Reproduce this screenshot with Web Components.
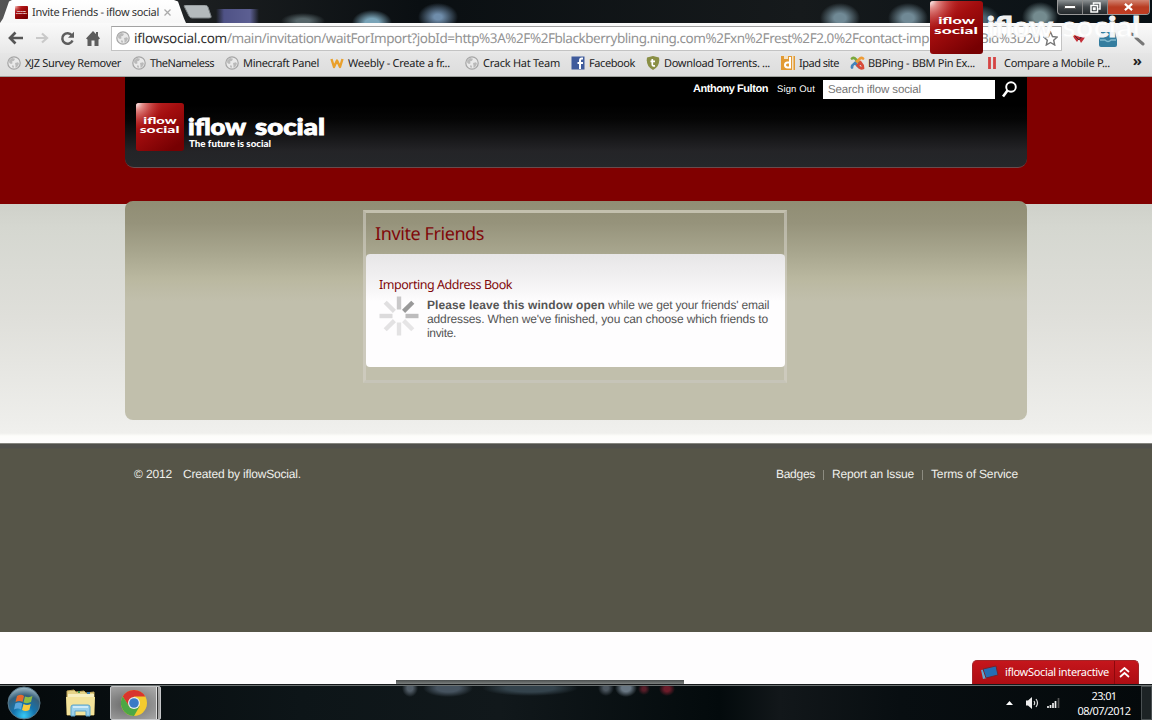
<!DOCTYPE html>
<html lang="en">
<head>
<meta charset="utf-8">
<title>Invite Friends - iflow social</title>
<style>
  html, body {
    margin: 0;
    padding: 0;
  }
  body {
    width: 1152px;
    height: 720px;
    overflow: hidden;
    font: 12px "Liberation Sans", Arial, sans-serif;
    background: #fefdfe;
  }
</style>
</head>
<body>
<desktop-screen></desktop-screen>

<script>
const UI_FONT = '"Noto Sans", "Open Sans", sans-serif';

const ICONS = {
  globe: `<svg width="14" height="14" viewBox="0 0 14 14"><circle cx="7" cy="7" r="6.2" fill="#e9e9e9" stroke="#a5a5a5" stroke-width="1.2"/><path d="M2 4.5 5 2l3 .7-1 2-2 .8.6 1.7L4 8 2.3 7zM8 7l3-.8 1 1.6-2 3.4-1.6.5L8.5 9.500z M5.500 9l1.500 1-.5 2-1.500-1z" fill="#bababa"/></svg>`,
  weebly: `<svg width="14" height="14" viewBox="0 0 14 14"><path d="M1.500 3 4 11 7 4.500 10 11 12.500 3" fill="none" stroke="#e9a02c" stroke-width="2.400" stroke-linejoin="round"/></svg>`,
  facebook: `<svg width="14" height="14" viewBox="0 0 14 14"><rect x=".5" y=".5" width="13" height="13" fill="#3f5b9c"/><path d="M12 2.500h-1.200Q9 2.500 9 4.500V13M6.500 7H12" fill="none" stroke="#fff" stroke-width="2"/></svg>`,
  torrent: `<svg width="14" height="14" viewBox="0 0 14 14"><path d="M7 0 13 1.500Q14.500 10 7 14-.5 10 1 1.500z" fill="#8a8f45"/><path d="M6.300 3v5.500q0 1.800 2.700 1.300M4.500 5.300H9" fill="none" stroke="#fff" stroke-width="1.700"/></svg>`,
  digg: `<svg width="14" height="14" viewBox="0 0 14 14"><path d="M0 0h14v14H0z" fill="#e29a33"/><path d="M9 1v10.500H6.500a2.500 2.500 0 0 1 0-5H9" fill="none" stroke="#fff" stroke-width="2"/><path d="M11 0h1.500v14H11zM3 0h4v3H3z" fill="#f3e2c6"/></svg>`,
  joomla: `<svg width="15" height="14" viewBox="0 0 15 14" fill="none" stroke-width="2.700" stroke-linecap="round"><path d="M2 2.500Q4 1 6 3.500L9.500 7" stroke="#7aa83d"/><path d="M13 2.500Q11 1 9 3.500L5.500 7" stroke="#ee9b36"/><path d="M2 11.500Q1.500 9.500 5 7l4 4" stroke="#4384bd"/><path d="m7.500 9.500 3-3Q13 9 13 12q-2 1-4-1" stroke="#d84a3a"/></svg>`,
  bars: `<svg width="14" height="14" viewBox="0 0 14 14"><path d="M3.500 1v12M8.500 1v12" stroke="#d54444" stroke-width="2.800"/></svg>`,
};

// Base class: clones the class' markup into an open shadow root
class ShadowElement extends HTMLElement {
  constructor() {
    super();
    this.attachShadow({ mode: 'open' });
    this.shadowRoot.innerHTML = `
      <style>
        *, *::after, *::before { box-sizing: border-box; }
        svg { display: block; flex: none; }
      </style>
      ${this.render()}
    `;
  }

  render() { return '<slot></slot>'; }
}

class BrandMark extends ShadowElement {
  render() {
    return `
      <style>
        :host { display: block; flex: none; }
      </style>
      <svg width="100%" height="100%" viewBox="0 0 52 52">
        <defs>
          <linearGradient id="base" x1="0" y1="0" x2=".7" y2="1">
            <stop offset="0" stop-color="#c4302e"/>
            <stop offset=".45" stop-color="#a30d0e"/>
            <stop offset="1" stop-color="#760002"/>
          </linearGradient>
          <radialGradient id="shine" cx="0" cy="0" r=".55">
            <stop offset="0" stop-color="#fff"/>
            <stop offset=".25" stop-color="#f0b0ac" stop-opacity=".75"/>
            <stop offset="1" stop-color="#c03030" stop-opacity="0"/>
          </radialGradient>
        </defs>
        <rect width="52" height="52" rx="3" fill="url(#base)"/>
        <rect width="52" height="52" rx="3" fill="url(#shine)"/>
        <g fill="#fff" font-family="Lato, sans-serif" font-weight="900" font-size="10">
          <text x="8" y="23" textLength="36" lengthAdjust="spacingAndGlyphs">iflow</text>
          <text x="4" y="32.500" textLength="43" lengthAdjust="spacingAndGlyphs">social</text>
        </g>
      </svg>
    `;
  }
}

class BrowserTabs extends ShadowElement {
  render() {
    return `
      <style>
        :host {
          height: 23px;
          display: flex;
          background:
            linear-gradient(90deg, transparent 216px, #4f5286 224px, #5c5f92 250px, transparent 259px) 0 9px no-repeat,
            radial-gradient(ellipse 22px 8px at 303px 21px, #566569 30%, transparent),
            radial-gradient(ellipse 20px 13px at 372px 23px, #79a3b7 35%, transparent),
            radial-gradient(ellipse 20px 14px at 438px 17px, #6f8dab 20%, transparent),
            radial-gradient(ellipse 20px 15px at 840px 18px, #708995 30%, transparent),
            radial-gradient(ellipse 20px 15px at 908px 18px, #708995 30%, transparent),
            radial-gradient(ellipse 20px 15px at 980px 20px, #4e6570 30%, transparent),
            radial-gradient(ellipse 18px 15px at 1040px 17px, #748b8f 35%, transparent),
            linear-gradient(90deg, #555 0, #1b1e20 200px, #0a0f12 420px, #161a1c 800px, #081015 1152px);
        }
        .tab {
          width: 186px;
          height: 23px;
          padding: 1px 0 0 15px;
          display: flex;
          align-items: center;
          gap: 4px;
          color: #333;
          font: 11px ${UI_FONT};
          background: linear-gradient(#fff, #f7f7f7);
          clip-path: polygon(0 100%, 3px 80%, 9px 7%, 12px 0, 174px 0, 178px 7%, 184px 80%, 100% 100%);
        }
        brand-mark { width: 13px; height: 13px; }
        .close { margin-left: 1px; }
        .new-tab { margin: 5px 0 0 -3px; }
        .controls {
          width: 93px;
          height: 15px;
          margin: 0 2px 0 auto;
          display: flex;
          border: solid 1px #999;
          border-top: none;
          border-radius: 0 0 4px 4px;
          overflow: hidden;
          background: linear-gradient(#8d9294, #42474a 50%, #24292c);
        }
        .controls span {
          width: 25px;
          border-right: solid 1px #888;
          display: grid;
          place-items: center;
        }
        .controls .exit {
          flex: 1;
          border: none;
          background: linear-gradient(#d28572, #b83c22 50%, #c13c22);
        }
      </style>
      <div class="tab">
        <brand-mark></brand-mark>
        <text-line w="127">Invite Friends - iflow social</text-line>
        <svg class="close" width="7" height="7" viewBox="0 0 7 7"><path d="m.5.5 6 6m0-6-6 6" stroke="#aaa" stroke-width="1.300"/></svg>
      </div>
      <svg class="new-tab" width="29" height="14" viewBox="0 0 29 14"><path d="M1 1q0-1 2-1h19q2 0 3 2l3 9q1 2-2 2H9q-2 0-3-2z" fill="#b4babd" stroke="#7a8083"/></svg>
      <div class="controls">
        <span><svg width="12" height="6" viewBox="0 0 12 6"><path d="M.5 1.500h11v3H.5z" fill="#fff" stroke="#555"/></svg></span>
        <span><svg width="11" height="11" viewBox="0 0 11 11" fill="none" stroke="#fff" stroke-width="1.500"><path d="M3.500 2.500V1H10v6H8.500M1 3.500h6.500V10H1zM3.500 6h1.500v1.500H3.500z"/></svg></span>
        <span class="exit"><svg width="9" height="8" viewBox="0 0 10 8"><path d="m1 .5 8 7m0-7-8 7" stroke="#fff" stroke-width="2.400"/></svg></span>
      </div>
    `;
  }
}

class AddressBar extends ShadowElement {
  render() {
    return `
      <style>
        :host {
          height: 30px;
          padding: 3px 0 2px 8px;
          display: flex;
          align-items: center;
          background: linear-gradient(#fafafa, #e8e8e8);
        }
        .nav {
          width: 103px;
          padding-bottom: 1px;
          display: flex;
          gap: 11px;
          align-items: center;
        }
        .field {
          width: 951px;
          height: 25px;
          padding: 0 3px 1px 4px;
          border: solid 1px #c3c3c3;
          border-top-color: #a2a2a2;
          display: flex;
          align-items: center;
          color: #939393;
          font: 13.500px ${UI_FONT};
          background: #fff;
        }
        .host { margin-left: 4px; color: #333; }
        .tail { margin-left: 51px; }
        .star { margin-left: auto; }
        .tools {
          flex: 1;
          padding-left: 10px;
          display: flex;
          align-items: center;
          gap: 13px;
        }
      </style>
      <div class="nav">
        <svg width="16" height="14" viewBox="0 0 16 14" fill="none" stroke="#555" stroke-width="2.700"><path d="M7.500 1.500 2 7l5.500 5.500M2.500 7H15"/></svg>
        <svg width="14" height="12" viewBox="0 0 14 12" fill="none" stroke="#c9c9c9" stroke-width="2.200"><path d="M7 1.500 12 6l-5 4.500M11.500 6H1"/></svg>
        <svg width="15" height="15" viewBox="0 0 15 15"><path d="M11.800 4.200A5.300 5.300 0 1 0 12.500 9.500" fill="none" stroke="#5d5d5d" stroke-width="2.500"/><path d="M14 .8v6H8z" fill="#5d5d5d"/></svg>
        <svg width="14" height="15" viewBox="0 0 14 15"><path d="m7 0 3 3V1h2v4l2 2.500-1.500 1V15H8.500V9.500h-3V15H1.500V8.500L0 7.500z" fill="#5d5d5d"/></svg>
      </div>
      <div class="field">
        ${ICONS.globe}
        <text-line class="host" w="93">iflowsocial.com</text-line>
        <text-line w="702">/main/invitation/waitForImport?jobId=http%3A%2F%2Fblackberrybling.ning.com%2Fxn%2Frest%2F2.0%2Fcontact-imp</text-line>
        <text-line class="tail" w="60">Bid%3D20</text-line>
        <svg class="star" width="15" height="15" viewBox="0 0 15 15"><path d="m7.500 1 2 4.500 4.700.5-3.500 3.200 1 4.800-4.200-2.500L3.300 14l1-4.800L.8 6l4.700-.5z" fill="#fff" stroke="#777" stroke-width="1.400"/></svg>
      </div>
      <div class="tools">
        <svg width="14" height="10" viewBox="0 0 14 10"><path d="m0 0 5 2 3 1 6-2-2 4-3 4-2-4-2 3-3-4z" fill="#c52e37"/><path d="m3 2 4 4 3-4" fill="none" stroke="#5b242a"/></svg>
        <svg width="18" height="16" viewBox="0 0 18 16"><path d="M2 1h14l2 8v5q0 2-2 2H2q-2 0-2-2V9z" fill="#347d9f"/><path d="M1 9h5q3 3 6 0h5" fill="none" stroke="#83b9ce" stroke-width="1.500"/></svg>
        <svg width="15" height="15" viewBox="0 0 15 15"><path d="m1 3 4 1 1 3 7 6" fill="none" stroke="#777" stroke-width="3" stroke-linecap="round"/></svg>
      </div>
    `;
  }
}

class BookmarkItem extends ShadowElement {
  static get observedAttributes() { return ['icon']; }

  render() {
    return `
      <style>
        :host {
          display: flex;
          align-items: center;
        }
        .icon {
          width: 18px;
          flex: none;
        }
      </style>
      <span class="icon"></span>
      <slot></slot>
    `;
  }

  attributeChangedCallback(name, prev, icon) {
    this.shadowRoot.querySelector('.icon').innerHTML = ICONS[icon];
  }
}

class BookmarkBar extends ShadowElement {
  render() {
    const items = [
      ['globe', 96, 'XJZ Survey Remover'],
      ['globe', 64, 'TheNameless'],
      ['globe', 76, 'Minecraft Panel'],
      ['weebly', 102, 'Weebly - Create a fr...'],
      ['globe', 77, 'Crack Hat Team'],
      ['facebook', 46, 'Facebook'],
      ['torrent', 106, 'Download Torrents. ...'],
      ['digg', 40, 'Ipad site'],
      ['joomla', 107, 'BBPing - BBM Pin Ex...'],
      ['bars', 106, 'Compare a Mobile P...'],
    ];
    return `
      <style>
        :host {
          height: 24px;
          padding: 0 0 3px 7px;
          display: flex;
          align-items: center;
          gap: 11px;
          color: #222;
          font: 11px ${UI_FONT};
          background: linear-gradient(#e6e6e6, #dcdcdc);
          border-bottom: solid 1px #a0a39f;
        }
        bookmark-item[icon="weebly"] { margin-right: 4px; }
        .more { margin: 0 10px 6px auto; font-size: 15px; font-weight: bold; }
      </style>
      ${items.map(([icon, w, label]) => `
        <bookmark-item icon="${icon}"><text-line w="${w}">${label}</text-line></bookmark-item>
      `).join('')}
      <span class="more">»</span>
    `;
  }
}

class SiteHeader extends ShadowElement {
  render() {
    return `
      <style>
        :host {
          width: 902px;
          height: 91px;
          margin: 0 auto 1px;
          display: block;
          border-radius: 0 0 9px 9px;
          border-bottom: solid 1px #6b4a4c;
          background: linear-gradient(#000 28px, #050505 42px, #242427 74px, #25272a);
        }
        .account {
          height: 24px;
          padding-right: 10px;
          display: flex;
          align-items: center;
          justify-content: flex-end;
          color: #fff;
        }
        .name { font-weight: bold; font-size: 11px; }
        .out { margin: 0 8px 0 9px; font-size: 9.500px; }
        .search {
          width: 172px;
          height: 19px;
          margin: 1px 7px 0 0;
          padding-left: 5px;
          display: flex;
          align-items: center;
          color: #767676;
          background: #fff;
          font-size: 11.500px;
        }
        .brand { padding: 2px 0 0 11px; display: flex; gap: 3px; }
        brand-mark { width: 48px; height: 48px; }
      </style>
      <div class="account">
        <text-line class="name" w="75">Anthony Fulton</text-line>
        <text-line class="out" w="38">Sign Out</text-line>
        <div class="search"><text-line w="93">Search iflow social</text-line></div>
        <svg width="15" height="17" viewBox="0 0 15 17" fill="none" stroke="#fff"><circle cx="9" cy="6" r="4.800" stroke-width="1.900"/><path d="m5.500 9.500-4.500 6" stroke-width="2.600"/></svg>
      </div>
      <div class="brand">
        <brand-mark></brand-mark>
        <svg width="145" height="50" viewBox="0 0 145 50" fill="#fff" font-family="Lato, sans-serif" font-weight="900">
          <g font-size="23.500" stroke="#fff" stroke-width=".9">
            <text x="1" y="32" textLength="58" lengthAdjust="spacingAndGlyphs">iflow</text>
            <text x="68" y="32" textLength="70" lengthAdjust="spacingAndGlyphs">social</text>
          </g>
          <text x="2" y="44" font-size="9.500" textLength="82" lengthAdjust="spacingAndGlyphs">The future is social</text>
        </svg>
      </div>
    `;
  }
}

class LoadingSpinner extends ShadowElement {
  render() {
    const shades = ['#c9c8c9', '#999', '#bdbcbd', '#e6e5e6', '#e3e2e3', '#e3e2e3', '#dcdbdc', '#e0dfe0'];
    return `
      <style>
        :host { display: block; }
      </style>
      <svg width="40" height="40" viewBox="-20 -20 40 40" stroke-width="4.400">
        ${shades.map((shade, i) => `<path d="M0-6.500V-19.500" stroke="${shade}" transform="rotate(${i * 45})"/>`).join('')}
      </svg>
    `;
  }
}

class InvitePanel extends ShadowElement {
  render() {
    return `
      <style>
        :host {
          width: 424px;
          height: 173px;
          margin-right: 2px;
          display: block;
          border: solid 3px rgba(214, 211, 203, .55);
          border-top-color: #c3c0ae;
          border-bottom-color: rgba(200, 198, 188, .8);
        }
        h1, h2, p { margin: 0; font-weight: normal; }
        h1 {
          height: 41px;
          padding: 2px 0 0 9px;
          display: flex;
          align-items: center;
          color: #80080a;
          font: 18px/1 ${UI_FONT};
        }
        .card {
          width: 419px;
          height: 113px;
          padding: 21px 0 0 13px;
          border-radius: 4px;
          background: linear-gradient(#e7e6e7, #f2f1f2 26px, #fefdfe 48px);
        }
        h2 {
          height: 19px;
          color: #80080a;
          font: 12.500px/19px ${UI_FONT};
        }
        .status { display: flex; gap: 8px; }
        .message {
          padding-top: 4px;
          display: flex;
          flex-direction: column;
          color: #555;
          font-size: 12px;
          line-height: 14.300px;
        }
        loading-spinner { margin-top: 2px; }
      </style>
      <h1><text-line w="109">Invite Friends</text-line></h1>
      <div class="card">
        <h2><text-line w="133">Importing Address Book</text-line></h2>
        <div class="status">
          <loading-spinner></loading-spinner>
          <p class="message">
            <span><b><text-line w="178">Please leave this window open</text-line></b> <text-line w="161">while we get your friends' email</text-line></span>
            <text-line w="341">addresses. When we've finished, you can choose which friends to</text-line>
            <text-line w="29">invite.</text-line>
          </p>
        </div>
      </div>
    `;
  }
}

class SiteFooter extends ShadowElement {
  render() {
    return `
      <style>
        :host {
          height: 189px;
          padding: 23px 134px 0;
          display: flex;
          justify-content: space-between;
          align-items: flex-start;
          color: #f0f0ec;
          font-size: 12px;
          line-height: 15px;
          background: linear-gradient(#50504c 4px, #565548 5px);
          border-top: solid 1px #85857f;
        }
        div { display: flex; }
        .left { gap: 11px; }
        .right { gap: 8px; }
        i { width: 1px; height: 10px; margin-top: 3px; background: #8c8b80; }
      </style>
      <div class="left">
        <text-line w="38">© 2012</text-line>
        <text-line w="118">Created by iflowSocial.</text-line>
      </div>
      <div class="right">
        <text-line w="39">Badges</text-line><i></i>
        <text-line w="82">Report an Issue</text-line><i></i>
        <text-line w="87">Terms of Service</text-line>
      </div>
    `;
  }
}

class SitePage extends ShadowElement {
  render() {
    return `
      <style>
        :host {
          height: 607px;
          display: flex;
          flex-direction: column;
          background: linear-gradient(#800000 127px, #cfd1ca 127px, #d5d7d0 150px, #dfdfda 240px, #eeeeeb 345px, #f0f0ed 356px, #fdfdfa 359px, #fefdfe 366px);
        }
        main {
          width: 902px;
          height: 220px;
          margin: 32px auto 23px;
          padding-top: 9px;
          display: flex;
          justify-content: center;
          border-radius: 8px;
          background: linear-gradient(#908d74, #96937b 22px, #a7a58d 50px, #bab8a0 78px, #c1bfac 100px);
        }
        .bottom {
          flex: 1;
          padding: 28px 13px 0 0;
          display: flex;
          justify-content: flex-end;
        }
        .chat {
          width: 167px;
          height: 24px;
          display: flex;
          align-items: center;
          color: #fff;
          font: 11px ${UI_FONT};
          background: linear-gradient(#c5161c, #ad0d13);
          border: solid 1px #a32528;
          border-bottom: none;
          border-radius: 5px 5px 0 0;
        }
        .chat .pic { margin: 0 6px 0 7px; }
        .chat .expand {
          height: 100%;
          margin-left: 5px;
          padding-left: 4px;
          display: flex;
          align-items: center;
          border-left: solid 1px #8e070c;
        }
      </style>
      <site-header></site-header>
      <main><invite-panel></invite-panel></main>
      <site-footer></site-footer>
      <div class="bottom">
        <div class="chat">
          <svg class="pic" width="19" height="16" viewBox="0 0 19 16"><path d="m1 5 5-1 1 9-4 1z" fill="#65a5cd"/><path d="m3 4 13-3 2 9-12 3z" fill="#246eb5" stroke="#75242e"/></svg>
          <text-line w="104">iflowSocial interactive</text-line>
          <div class="expand"><svg width="11" height="11" viewBox="0 0 11 11" fill="none" stroke="#fff" stroke-width="1.700"><path d="m1 5 4.500-4L10 5M1 10l4.500-4L10 10"/></svg></div>
        </div>
      </div>
    `;
  }
}

class TaskBar extends ShadowElement {
  render() {
    return `
      <style>
        :host {
          height: 36px;
          display: flex;
          align-items: center;
          border-top: solid 1px #15181a;
          box-shadow: inset 0 1px #6c7272;
          background:
            radial-gradient(ellipse 8px 9px at 410px 3px, #525d67 35%, transparent),
            radial-gradient(ellipse 25px 9px at 448px 3px, #46535f 45%, transparent),
            radial-gradient(ellipse 48px 8px at 530px 3px, #34434c 50%, transparent),
            radial-gradient(ellipse 8px 8px at 606px 3px, #4c565f 30%, transparent),
            radial-gradient(ellipse 11px 9px at 626px 3px, #697783 40%, transparent),
            radial-gradient(ellipse 6px 6px at 644px 4px, #571d28 30%, transparent),
            radial-gradient(ellipse 8px 7px at 667px 4px, #6d1c2a 35%, transparent),
            linear-gradient(90deg, #04090b, #0d1518 300px, #11181b 500px, #030a0c 720px, #12171a 780px, #080e11 900px, #04090b);
        }
        .start { margin-left: 7px; }
        .files { margin-left: 24px; }
        .chrome {
          width: 51px;
          height: 34px;
          margin-left: 14px;
          display: flex;
          border: solid 1px #c4c5c7;
          border-radius: 2px;
          background: radial-gradient(ellipse at 35% 55%, #686868, #aaa 90%);
        }
        .chrome .app {
          width: 46px;
          display: grid;
          place-items: center;
          border-right: solid 1px #e0e0e0;
          box-shadow: 1px 0 #333;
        }
        .tray {
          height: 100%;
          margin-left: auto;
          display: flex;
          align-items: center;
          color: #fff;
          font: 11px/15px ${UI_FONT};
        }
        .tray .up { margin-right: 13px; }
        .tray .sound { margin-right: 8px; }
        .tray .net { margin-right: 17px; }
        .clock {
          width: 54px;
          padding-top: 2px;
          display: flex;
          flex-direction: column;
          align-items: center;
        }
        .peek {
          width: 11px;
          height: 34px;
          margin-left: 10px;
          border: solid 1px #4a5052;
          background: #1d2325;
        }
      </style>
      <svg class="start" width="34" height="34" viewBox="0 0 34 34">
        <defs>
          <radialGradient id="orb" cx=".5" cy=".9" r=".85">
            <stop offset="0" stop-color="#37c9f5"/>
            <stop offset=".4" stop-color="#1573ad"/>
            <stop offset=".75" stop-color="#355f7a"/>
            <stop offset="1" stop-color="#92afbd"/>
          </radialGradient>
        </defs>
        <circle cx="17" cy="17" r="16" fill="url(#orb)" stroke="#5a7a8c"/>
        <path d="M10 10q4-2.500 7 0l-1.500 6q-3-2-7 0z" fill="#e66a2c"/>
        <path d="M18 10.500q4 1.500 7.500-.5L24 16q-3.500 2-7.500.5z" fill="#90bd45"/>
        <path d="M8.300 17.500q4-2 7 0L14 23.500q-3-2-7 0z" fill="#5aa6dc"/>
        <path d="M16.500 18q3.500 2 7.300 0l-1.500 6q-3.500 2-7.300 0z" fill="#f8ca3c"/>
      </svg>
      <svg class="files" width="31" height="28" viewBox="0 0 31 28">
        <path d="M2 2 9 1l2 2 8-1 2 2 8-1v23H2z" fill="#e6d488" stroke="#bfa55a"/>
        <path d="M3 5h26v3H3z" fill="#f7efc0"/>
        <path d="M1 8h29l-1 18H2z" fill="#f3e39b"/>
        <path d="M6 27v-9q0-2 2-2h15q2 0 2 2v9h-4v-5H10v5z" fill="#9bd0ea" stroke="#5ba3cc"/>
        <path d="M8 18h15" stroke="#e0f4fc" stroke-width="1.500"/>
        <path d="M13 3h2" stroke="#4a9a54" stroke-width="2"/><path d="M22 4h3" stroke="#3c7db0" stroke-width="2"/>
      </svg>
      <div class="chrome">
        <div class="app">
          <svg width="26" height="26" viewBox="-13 -13 26 26">
            <circle r="13" fill="#f4cb2e"/>
            <path d="M-11.260-6.500A13 13 0 0 1 11.260-6.500H0L-5.200 3z" fill="#d9342d"/>
            <path d="M-11.260-6.500A13 13 0 0 0 0 13L5.600 3.200-5 3z" fill="#4da744"/>
            <circle r="6" fill="#eee"/>
            <circle r="4.800" fill="#3a79c5"/>
          </svg>
        </div>
      </div>
      <div class="tray">
        <svg class="up" width="7" height="4" viewBox="0 0 7 4"><path d="M3.500 0 7 4H0z" fill="#fff"/></svg>
        <svg class="sound" width="13" height="12" viewBox="0 0 13 12"><path d="M0 3.500h2L6 0v12L2 8.500H0z" fill="#eee"/><path d="M8 4q1.300 2 0 4M10 2q3 4 0 8" fill="none" stroke="#ddd" stroke-width="1.200"/></svg>
        <svg class="net" width="13" height="10" viewBox="0 0 13 10"><path d="M1 8v2M3.500 7v3M6 5v5M8.500 3v7" stroke="#eee" stroke-width="1.700"/><path d="M11.500 0v10" stroke="#555" stroke-width="1.700"/></svg>
        <div class="clock">
          <text-line w="25">23:01</text-line>
          <text-line w="53">08/07/2012</text-line>
        </div>
        <div class="peek"></div>
      </div>
    `;
  }
}

class DesktopScreen extends ShadowElement {
  render() {
    return `
      <style>
        :host {
          width: 1152px;
          height: 720px;
          display: flex;
          flex-direction: column;
          position: relative;
          overflow: hidden;
        }
        /* the logo and the hidden panel's edge float over the windows */
        .watermark {
          display: flex;
          gap: 3px;
          position: absolute;
          top: 1px;
          left: 930px;
        }
        .watermark brand-mark { width: 53px; height: 53px; }
        .edge {
          width: 288px;
          height: 4px;
          background: linear-gradient(#4a4e4e, #7c807f);
          position: absolute;
          top: 680px;
          left: 396px;
        }
      </style>
      <browser-tabs></browser-tabs>
      <address-bar></address-bar>
      <bookmark-bar></bookmark-bar>
      <site-page></site-page>
      <task-bar></task-bar>
      <div class="edge"></div>
      <div class="watermark">
        <brand-mark></brand-mark>
        <svg width="158" height="50" viewBox="0 0 158 50" font-family="Lato, sans-serif" font-weight="900" font-size="27.500" fill="#fff" fill-opacity=".95" stroke="#f4f5f5" stroke-width="1">
          <text x="1" y="36" textLength="66" lengthAdjust="spacingAndGlyphs">iflow</text>
          <text x="76" y="36" textLength="78" lengthAdjust="spacingAndGlyphs">social</text>
        </svg>
      </div>
    `;
  }
}

// One line of text, tracked so that it is `w` pixels wide
class TextLine extends ShadowElement {
  render() {
    return `
      <style>
        :host {
          display: inline-block;
          flex: none;
          white-space: nowrap;
          text-rendering: geometricPrecision;
        }
      </style>
      <span><slot></slot></span>
    `;
  }

  connectedCallback() {
    const { width } = this.shadowRoot.querySelector('span').getBoundingClientRect();
    const w = Number(this.getAttribute('w'));
    this.style.letterSpacing = `${(w - width) / this.textContent.length}px`;
    this.style.width = `${w}px`;
  }
}

window.customElements.define('brand-mark', BrandMark);
window.customElements.define('browser-tabs', BrowserTabs);
window.customElements.define('address-bar', AddressBar);
window.customElements.define('bookmark-item', BookmarkItem);
window.customElements.define('bookmark-bar', BookmarkBar);
window.customElements.define('site-header', SiteHeader);
window.customElements.define('loading-spinner', LoadingSpinner);
window.customElements.define('invite-panel', InvitePanel);
window.customElements.define('site-footer', SiteFooter);
window.customElements.define('site-page', SitePage);
window.customElements.define('task-bar', TaskBar);
window.customElements.define('desktop-screen', DesktopScreen);
// last, as it measures itself inside the finished tree
window.customElements.define('text-line', TextLine);
</script>
</body>
</html>
